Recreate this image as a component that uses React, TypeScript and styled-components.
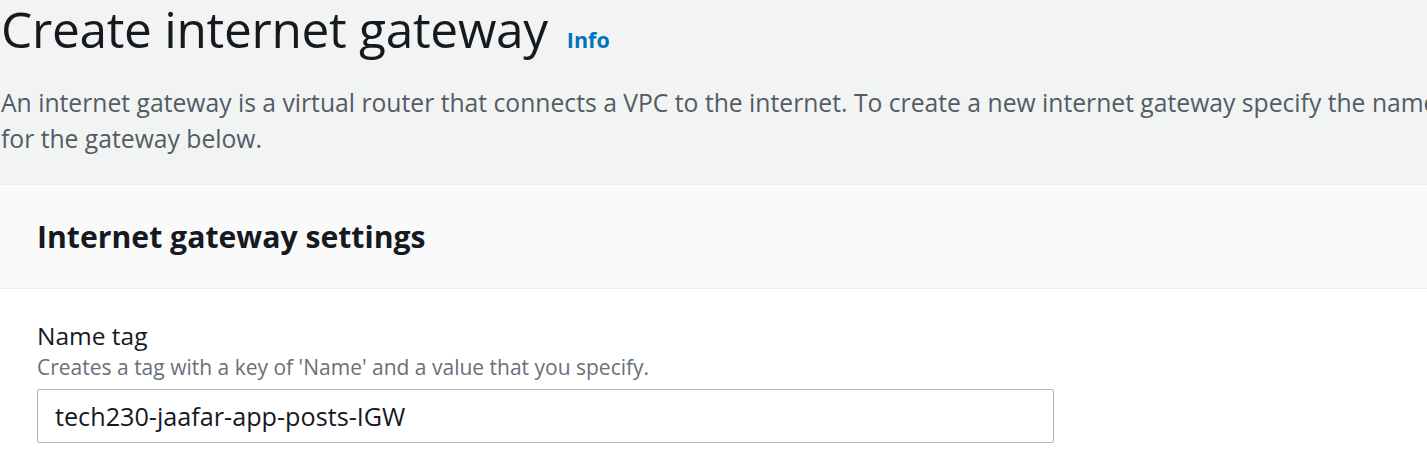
import styled, { createGlobalStyle } from "styled-components";

const GlobalStyle = createGlobalStyle`
  html, body {
    margin: 0;
    padding: 0;
    background: #f2f3f3;
    overflow: hidden;
  }
  body {
    font-family: "Open Sans", "Noto Sans", sans-serif;
    color: #16191f;
  }
`;

export default function App() {
  return (
    <>
      <GlobalStyle />
      <Page>
        <PageHeader>
          <TitleRow>
            <Title>Create internet gateway</Title>
            <InfoLink href="#">Info</InfoLink>
          </TitleRow>
          <Description>
            An internet gateway is a virtual router that connects a VPC to the internet. To create a new internet gateway specify the name
            <br />
            for the gateway below.
          </Description>
        </PageHeader>

        <Container>
          <ContainerHeader>
            <SectionTitle>Internet gateway settings</SectionTitle>
          </ContainerHeader>
          <ContainerBody>
            <FormField>
              <Label htmlFor="name-tag">Name tag</Label>
              <Hint>Creates a tag with a key of 'Name' and a value that you specify.</Hint>
              <TextInput id="name-tag" defaultValue="tech230-jaafar-app-posts-IGW" />
            </FormField>
          </ContainerBody>
        </Container>
      </Page>
    </>
  );
}

const Page = styled.div`
  width: 1500px;
  min-height: 471px;
  display: flex;
  flex-direction: column;
`;

const PageHeader = styled.div`
  display: flex;
  flex-direction: column;
  padding: 0 0 0 1px;
  height: 184px;
  box-sizing: border-box;
`;

const TitleRow = styled.div`
  display: flex;
  align-items: baseline;
  gap: 19px;
  height: 70px;
`;

const Title = styled.h1`
  margin: 0;
  font-size: 49.6px;
  font-weight: 400;
  line-height: 58px;
  color: #16191f;
  letter-spacing: -0.3px;
`;

const InfoLink = styled.a`
  font-size: 21.5px;
  font-weight: 700;
  color: #0073bb;
  text-decoration: none;
`;

const Description = styled.p`
  margin: 15px 0 0;
  font-size: 24.7px;
  line-height: 36px;
  color: #545b64;
  white-space: nowrap;
`;

const Container = styled.section`
  flex: 1;
  background: #ffffff;
  border-top: 1px solid #eaeded;
`;

const ContainerHeader = styled.div`
  background: #fafafa;
  border-bottom: 1px solid #eaeded;
  height: 104px;
  box-sizing: border-box;
  display: flex;
  align-items: center;
  padding: 0 37px;
`;

const SectionTitle = styled.h2`
  margin: 0;
  font-size: 30.2px;
  font-weight: 700;
  line-height: 36px;
  color: #16191f;
`;

const ContainerBody = styled.div`
  padding: 30px 37px 0;
`;

const FormField = styled.div`
  display: flex;
  flex-direction: column;
  width: 1017px;
`;

const Label = styled.label`
  font-size: 24.5px;
  line-height: 33px;
  color: #16191f;
`;

const Hint = styled.span`
  font-size: 21px;
  line-height: 30px;
  color: #687078;
  margin-bottom: 7px;
`;

const TextInput = styled.input`
  box-sizing: border-box;
  height: 54px;
  width: 100%;
  border: 1px solid #aab7b8;
  border-radius: 2px;
  padding: 0 17px;
  font-family: "Open Sans", "Noto Sans", sans-serif;
  font-size: 25.2px;
  color: #16191f;
  background: #ffffff;
  outline: none;
`;
